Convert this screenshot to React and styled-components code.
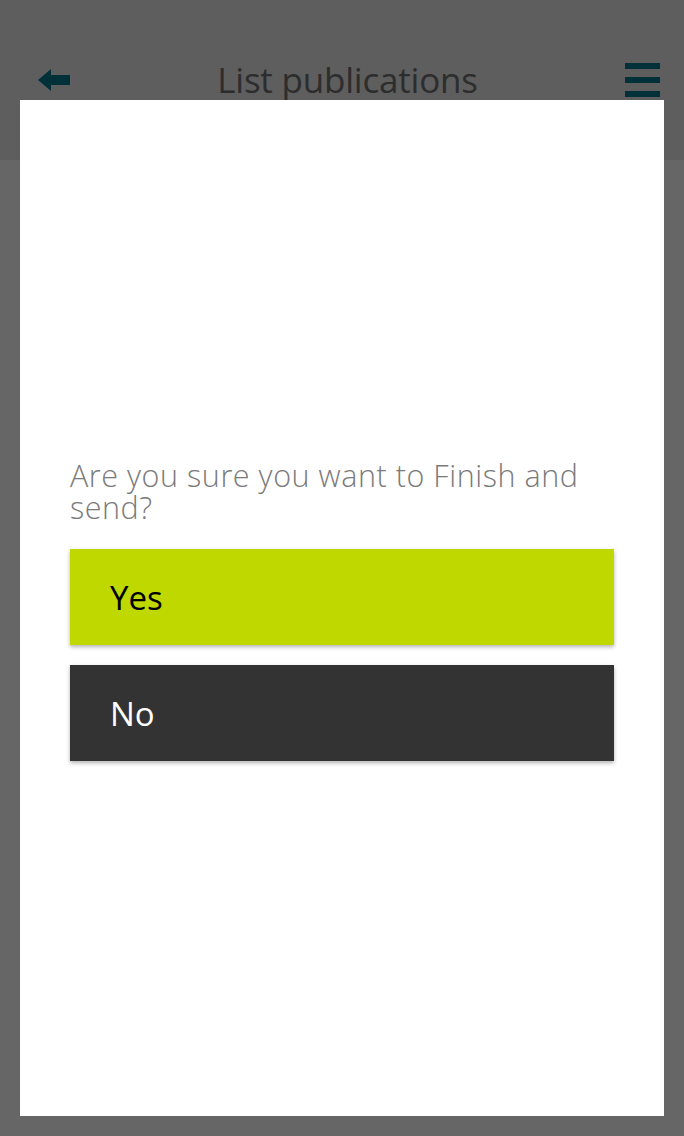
import styled, { createGlobalStyle } from 'styled-components';

const GlobalStyle = createGlobalStyle`
    html, body {
        margin: 0;
        padding: 0;
        height: 100%;
        background: #ffffff;
        font-family: "Open Sans", "Noto Sans", sans-serif;
    }
    #root {
        min-height: 100vh;
    }
`

const Page = styled.div`
    min-height: 100vh;
    display: flex;
    flex-direction: column;
    background: #ffffff;
`

const Header = styled.header`
    height: 160px;
    box-sizing: border-box;
    padding: 60px 24px 0 38px;
    display: flex;
    align-items: flex-start;
    justify-content: space-between;
    background: #ebebeb;
`

const IconButton = styled.button`
    border: none;
    background: none;
    padding: 0;
    width: ${props => props.size}px;
    height: 40px;
    display: flex;
    align-items: center;
    justify-content: center;
    color: #007a8f;
`

const Title = styled.h1`
    margin: 0;
    font-size: 35px;
    font-weight: 400;
    line-height: 40px;
    color: #707070;
    letter-spacing: -0.2px;
`

const Overlay = styled.div`
    position: fixed;
    inset: 0;
    background: rgba(0, 0, 0, 0.6);
    padding: 100px 20px 20px 20px;
    box-sizing: border-box;
    display: flex;
`

const Modal = styled.div`
    flex: 1;
    background: #ffffff;
    display: flex;
    flex-direction: column;
    justify-content: center;
    padding: 4px 50px 0 50px;
`

const Question = styled.p`
    margin: 0 0 26px 0;
    font-size: 30.5px;
    font-weight: 300;
    line-height: 32px;
    color: #7a7a7a;
    letter-spacing: 0.55px;
`

const Choice = styled.button`
    height: 96px;
    width: 100%;
    border: none;
    margin-bottom: ${props => props.last ? 0 : 20}px;
    padding: 0 40px;
    text-align: left;
    font-family: "Open Sans", "Noto Sans", sans-serif;
    font-size: 33px;
    font-weight: 400;
    color: ${props => props.primary ? '#000000' : '#ffffff'};
    background: ${props => props.primary ? '#bfd800' : '#333333'};
    box-shadow: 0 2px 4px rgba(0, 0, 0, 0.3);
`

function BackArrow() {
    return (
        <svg width="32" height="22" viewBox="0 0 32 22">
            <path d="M0 11 L13 0 L13 6 L32 6 L32 16 L13 16 L13 22 Z" fill="currentColor" />
        </svg>
    )
}

function MenuIcon() {
    return (
        <svg width="35" height="36" viewBox="0 0 35 36">
            <rect x="0" y="1" width="35" height="6" fill="currentColor" />
            <rect x="0" y="15" width="35" height="6" fill="currentColor" />
            <rect x="0" y="29" width="35" height="6" fill="currentColor" />
        </svg>
    )
}

export default function App() {
    return (
        <>
            <GlobalStyle />
            <Page>
                <Header>
                    <IconButton size={32} aria-label="back"><BackArrow /></IconButton>
                    <Title>List publications</Title>
                    <IconButton size={35} aria-label="menu"><MenuIcon /></IconButton>
                </Header>
            </Page>
            <Overlay>
                <Modal>
                    <Question>Are you sure you want to Finish and send?</Question>
                    <Choice primary>Yes</Choice>
                    <Choice last>No</Choice>
                </Modal>
            </Overlay>
        </>
    )
}
